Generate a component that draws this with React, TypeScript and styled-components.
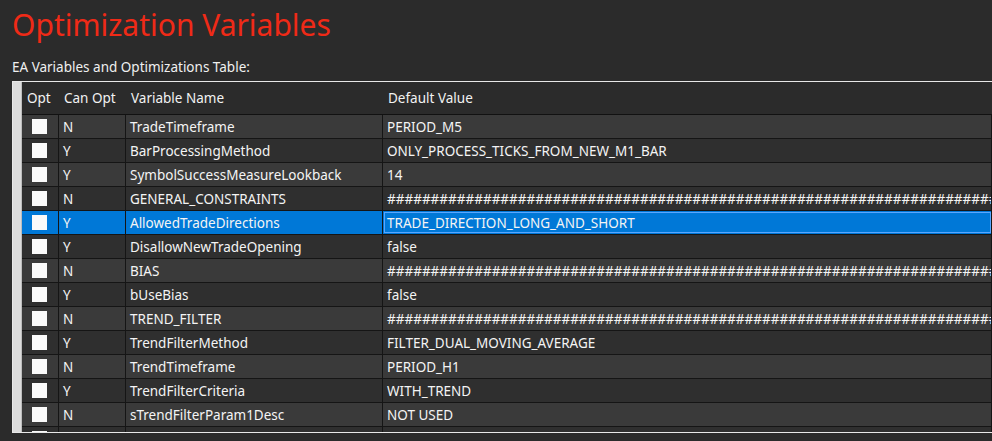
import React from 'react';
import styled, { createGlobalStyle } from 'styled-components';

const Global = createGlobalStyle`
  html, body { margin: 0; background: #2b2b2b; overflow: hidden; }
  body { font-family: "Noto Sans", "Open Sans", sans-serif; }
`;

const Page = styled.div`
  width: 992px;
  height: 441px;
  background: #2b2b2b;
  display: flex;
  flex-direction: column;
`;

const Title = styled.h1`
  margin: 0;
  padding: 5px 0 0 12px;
  height: 44px;
  font-size: 30px;
  font-weight: 400;
  line-height: 40px;
  color: #ef2a17;
  flex: none;
`;

const Caption = styled.div`
  padding-left: 12px;
  font-size: 13.5px;
  color: #f0f0f0;
  height: 32px;
  line-height: 36px;
  flex: none;
`;

const TableBox = styled.div`
  margin-left: 12px;
  height: 350px;
  border: 1px solid #e8e8e8;
  border-right: none;
  display: flex;
  overflow: hidden;
  flex: none;
`;

const Gutter = styled.div`
  width: 8px;
  background: #dcdcdc;
  border-right: 1px solid #bdbdbd;
  flex: none;
`;

const Grid = styled.div`
  flex: 1;
  display: flex;
  flex-direction: column;
`;

const COLS = '37px 67px 257px 1fr';

const HeadRow = styled.div`
  display: grid;
  grid-template-columns: ${COLS};
  height: 33px;
  flex: none;
  align-items: center;
  color: #f2f2f2;
  font-size: 13.5px;
  background: #2b2b2b;
  border-bottom: 1px solid #111;
  box-sizing: border-box;
`;

const HeadCell = styled.div`
  padding-left: 5px;
  white-space: nowrap;
`;

const Row = styled.div<{ $alt: boolean; $sel: boolean }>`
  display: grid;
  grid-template-columns: ${COLS};
  height: 24px;
  flex: none;
  background: ${p => (p.$sel ? '#0078d7' : p.$alt ? '#2f2f2f' : '#3a3a3a')};
  border-bottom: 1px solid #151515;
  box-sizing: border-box;
  color: #f4f4f4;
  font-size: 13.5px;
`;

const Cell = styled.div<{ $focus?: boolean }>`
  display: flex;
  align-items: center;
  padding-left: 4px;
  border-right: 1px solid #151515;
  white-space: nowrap;
  overflow: hidden;
  box-sizing: border-box;
  ${p => (p.$focus ? 'outline: 1px solid #5aa6ff; outline-offset: -2px;' : '')}
`;

const Check = styled.div`
  width: 15px;
  height: 15px;
  background: #fafafa;
  margin-left: 6px;
`;

const HASH = '#'.repeat(70);

const rows: [string, string, string][] = [
  ['N', 'TradeTimeframe', 'PERIOD_M5'],
  ['Y', 'BarProcessingMethod', 'ONLY_PROCESS_TICKS_FROM_NEW_M1_BAR'],
  ['Y', 'SymbolSuccessMeasureLookback', '14'],
  ['N', 'GENERAL_CONSTRAINTS', HASH],
  ['Y', 'AllowedTradeDirections', 'TRADE_DIRECTION_LONG_AND_SHORT'],
  ['Y', 'DisallowNewTradeOpening', 'false'],
  ['N', 'BIAS', HASH],
  ['Y', 'bUseBias', 'false'],
  ['N', 'TREND_FILTER', HASH],
  ['Y', 'TrendFilterMethod', 'FILTER_DUAL_MOVING_AVERAGE'],
  ['N', 'TrendTimeframe', 'PERIOD_H1'],
  ['Y', 'TrendFilterCriteria', 'WITH_TREND'],
  ['N', 'sTrendFilterParam1Desc', 'NOT USED'],
  ['N', 'TrendFilterParam1', ''],
];

export default function App() {
  return (
    <Page>
      <Global />
      <Title>Optimization Variables</Title>
      <Caption>EA Variables and Optimizations Table:</Caption>
      <TableBox>
        <Gutter />
        <Grid>
          <HeadRow>
            <HeadCell>Opt</HeadCell>
            <HeadCell>Can Opt</HeadCell>
            <HeadCell>Variable Name</HeadCell>
            <HeadCell>Default Value</HeadCell>
          </HeadRow>
          {rows.map(([can, name, val], i) => {
            const sel = i === 4;
            return (
              <Row key={name} $alt={i % 2 === 1} $sel={sel}>
                <Cell><Check /></Cell>
                <Cell>{can}</Cell>
                <Cell>{name}</Cell>
                <Cell $focus={sel}>{val}</Cell>
              </Row>
            );
          })}
        </Grid>
      </TableBox>
    </Page>
  );
}
